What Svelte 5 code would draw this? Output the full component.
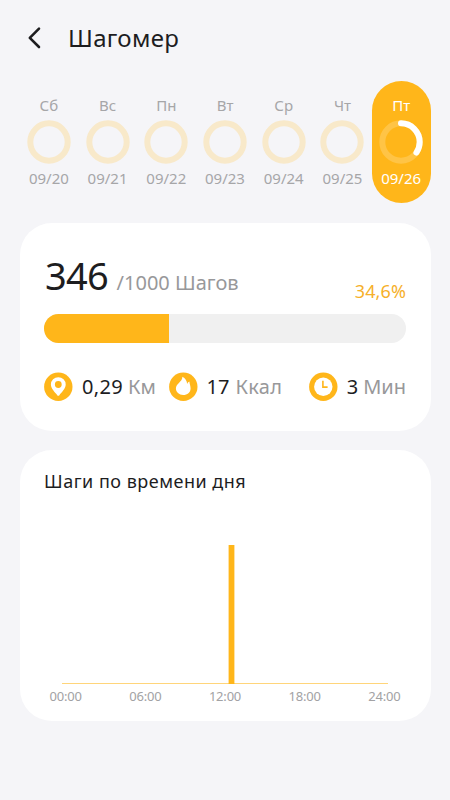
<script lang="ts">
  type Day = { name: string; date: string; progress: number };

  const days: Day[] = [
    { name: "Сб", date: "09/20", progress: 0 },
    { name: "Вс", date: "09/21", progress: 0 },
    { name: "Пн", date: "09/22", progress: 0 },
    { name: "Вт", date: "09/23", progress: 0 },
    { name: "Ср", date: "09/24", progress: 0 },
    { name: "Чт", date: "09/25", progress: 0 },
    { name: "Пт", date: "09/26", progress: 34.6 },
  ];

  const stats = [
    { icon: "pin", value: "0,29", unit: "Км" },
    { icon: "flame", value: "17", unit: "Ккал" },
    { icon: "clock", value: "3", unit: "Мин" },
  ];

  const hours = ["00:00", "06:00", "12:00", "18:00", "24:00"];

  let selected = $state("09/26");
  const steps = 346;
  const goal = 1000;
  const percent = (steps / goal) * 100;
</script>

<main>
  <header>
    <button class="back" type="button" aria-label="Назад">
      <svg width="16" height="24" viewBox="0 0 16 24">
        <path d="M13 2.6 3.8 11.8 13 21" />
      </svg>
    </button>
    <h1>Шагомер</h1>
  </header>

  <nav class="days">
    {#each days as day}
      <button
        type="button"
        class="day"
        class:active={selected === day.date}
        onclick={() => (selected = day.date)}
      >
        <span class="name">{day.name}</span>
        <svg class="ring" width="44" height="44" viewBox="0 0 44 44">
          <circle class="track" cx="22" cy="22" r="18.7" />
          {#if day.progress > 0}
            <circle
              class="arc"
              cx="22"
              cy="22"
              r="18.7"
              pathLength="100"
              stroke-dasharray="{day.progress} 100"
              transform="rotate(-90 22 22)"
            />
          {/if}
        </svg>
        <span class="date">{day.date}</span>
      </button>
    {/each}
  </nav>

  <section class="card summary">
    <div class="totals">
      <span class="steps">{steps}</span>
      <span class="goal">/{goal} Шагов</span>
      <span class="percent">{percent.toFixed(1).replace(".", ",")}%</span>
    </div>
    <div class="bar">
      <div class="fill" style="width: {percent}%"></div>
    </div>
    <div class="stats">
      {#each stats as stat}
        <div class="stat {stat.icon}">
          <svg width="29" height="29" viewBox="0 0 29 29">
            <circle cx="14.3" cy="14.8" r="14.2" fill="#ffb61a" />
            {#if stat.icon === "pin"}
              <path
                fill="#fff"
                fill-rule="evenodd"
                d="M14.3 5.2a7.4 7.4 0 0 0-7.4 7.4c0 4.3 4.2 7.7 6.5 10.8.4.6 1.4.6 1.8 0 2.3-3.1 6.5-6.5 6.5-10.8a7.4 7.4 0 0 0-7.4-7.4Zm0 3.9a3.4 3.4 0 1 1 0 6.8 3.4 3.4 0 0 1 0-6.8Z"
              />
            {:else if stat.icon === "flame"}
              <path
                fill="#fff"
                d="M13.4 4.8c.1 2.6-1.8 4.4-3.5 6.2-1.8 1.9-3 3.3-3 5.3 0 3.9 3.2 6.7 7.3 6.7s7.4-2.8 7.4-6.6c0-2.4-1-4.2-1.2-6.9-1.1.6-1.9 1.4-2.2 2.6-.3-2.9-1.9-6-4.8-7.3Z"
              />
            {:else}
              <circle cx="14.3" cy="14.8" r="9.2" fill="#fff" />
              <path d="M13.9 8.8v6.3h4.7" fill="none" stroke="#ffb61a" stroke-width="1.6" />
            {/if}
          </svg>
          <span class="value">{stat.value}</span>
          <span class="unit">{stat.unit}</span>
        </div>
      {/each}
    </div>
  </section>

  <section class="card chart">
    <h2>Шаги по времени дня</h2>
    <svg class="plot" width="362" height="144" viewBox="0 0 362 144">
      <rect x="18" y="143" width="326" height="1" fill="#ffd57a" />
      <rect x="184.6" y="5" width="5.8" height="139" fill="#ffb61a" />
    </svg>
    <div class="hours">
      {#each hours as hour}
        <span>{hour}</span>
      {/each}
    </div>
  </section>
</main>

<style>
  :global(body) {
    margin: 0;
    background: #f5f5f8;
  }

  main {
    box-sizing: border-box;
    width: 450px;
    height: 800px;
    padding: 18px 19.5px 0;
    background: #f5f5f8;
    color: #1d1d1f;
    font-family: "Noto Sans", "Open Sans", sans-serif;
  }

  button {
    padding: 0;
    border: 0;
    background: none;
    font: inherit;
    cursor: pointer;
  }

  header {
    display: flex;
    align-items: center;
    height: 39px;
    padding-left: 6px;
  }

  .back {
    display: flex;
  }

  .back path {
    fill: none;
    stroke: #1d1d1f;
    stroke-width: 2.6;
    stroke-linecap: round;
    stroke-linejoin: round;
  }

  h1 {
    margin: 0 0 0 26.5px;
    font-size: 24px;
    line-height: 39px;
    font-weight: 400;
    letter-spacing: 0.3px;
  }

  .days {
    display: grid;
    grid-template-columns: repeat(7, 1fr);
    margin-top: 24px;
  }

  .day {
    display: flex;
    flex-direction: column;
    align-items: center;
    height: 122px;
    padding-top: 14px;
    box-sizing: border-box;
    border-radius: 30px;
    color: #a6a6a8;
    font-size: 15px;
    line-height: 20px;
  }

  .ring {
    margin: 5px 0 4px;
    fill: none;
    stroke-width: 6;
  }

  .track {
    stroke: #f8e9ca;
  }

  .arc {
    stroke: #fff;
    stroke-linecap: round;
  }

  .day.active {
    background: #ffb61a;
    color: #fff;
  }

  .active .track {
    stroke: #ffc446;
  }

  .card {
    box-sizing: border-box;
    padding: 0 24.5px;
    border-radius: 32px;
    background: #fff;
  }

  .summary {
    height: 208px;
    margin-top: 19.5px;
    padding-top: 26px;
  }

  .totals {
    display: flex;
    align-items: baseline;
    height: 52px;
    line-height: 52px;
  }

  .steps {
    padding-left: 1px;
    font-size: 38px;
    letter-spacing: -0.7px;
  }

  .goal {
    margin-left: 8.5px;
    color: #98989a;
    font-size: 20px;
  }

  .percent {
    position: relative;
    top: 8px;
    margin-left: auto;
    color: #f6b02a;
    font-size: 18px;
    letter-spacing: 0.1px;
  }

  .bar {
    height: 29px;
    margin-top: 13.5px;
    overflow: hidden;
    border-radius: 15px;
    background: #f0f0f0;
  }

  .fill {
    height: 100%;
    background: #ffb61a;
  }

  .stats {
    display: grid;
    grid-template-columns: 124.5px 1fr auto;
    margin-top: 29px;
  }

  .stat {
    display: flex;
    align-items: center;
    font-size: 20px;
    line-height: 29px;
    white-space: nowrap;
  }

  .value {
    margin-left: 9px;
  }

  .pin .value {
    letter-spacing: 0.3px;
  }

  .unit {
    margin-left: 5px;
    color: #98989a;
  }

  .flame .unit {
    margin-left: 6px;
    letter-spacing: 0.3px;
  }

  .chart {
    height: 271.5px;
    margin-top: 19px;
    padding-top: 18px;
  }

  h2 {
    margin: 0;
    font-size: 18px;
    line-height: 26px;
    font-weight: 400;
    letter-spacing: 0.5px;
  }

  .plot {
    display: block;
    margin-top: 46px;
  }

  .hours {
    display: flex;
    justify-content: space-between;
    margin-top: 3px;
    padding: 0 5.5px;
    color: #a2a2a4;
    font-size: 13px;
    line-height: 18px;
    letter-spacing: -0.2px;
  }
</style>
